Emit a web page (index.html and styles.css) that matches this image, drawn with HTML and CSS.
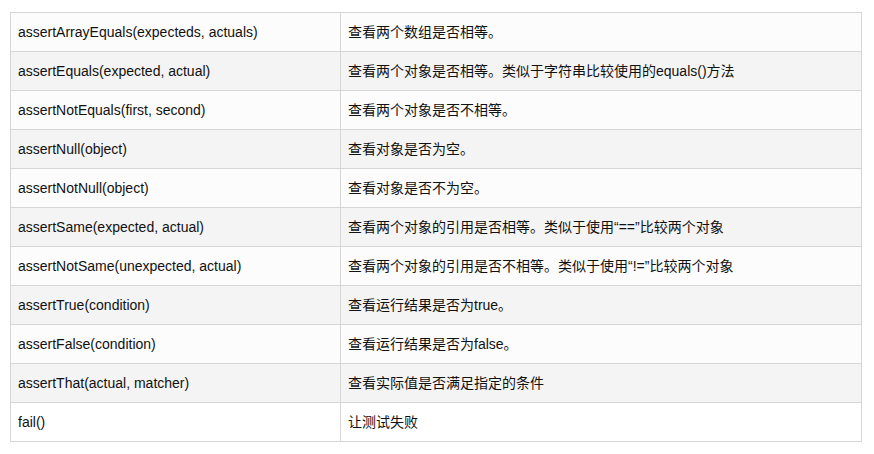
FILE: index.html
```html
<!DOCTYPE html>
<html lang="zh">
<head>
<meta charset="utf-8">
<link rel="stylesheet" href="styles.css">
</head>
<body>
<table class="api">
  <tr><td class="m">assertArrayEquals(expecteds, actuals)</td><td>查看两个数组是否相等。</td></tr>
  <tr><td class="m">assertEquals(expected, actual)</td><td>查看两个对象是否相等。类似于字符串比较使用的equals()方法</td></tr>
  <tr><td class="m">assertNotEquals(first, second)</td><td>查看两个对象是否不相等。</td></tr>
  <tr><td class="m">assertNull(object)</td><td>查看对象是否为空。</td></tr>
  <tr><td class="m">assertNotNull(object)</td><td>查看对象是否不为空。</td></tr>
  <tr><td class="m">assertSame(expected, actual)</td><td>查看两个对象的引用是否相等。类似于使用“==”比较两个对象</td></tr>
  <tr><td class="m">assertNotSame(unexpected, actual)</td><td>查看两个对象的引用是否不相等。类似于使用“!=”比较两个对象</td></tr>
  <tr><td class="m">assertTrue(condition)</td><td>查看运行结果是否为true。</td></tr>
  <tr><td class="m">assertFalse(condition)</td><td>查看运行结果是否为false。</td></tr>
  <tr><td class="m">assertThat(actual, matcher)</td><td>查看实际值是否满足指定的条件</td></tr>
  <tr><td class="m">fail()</td><td>让测试失败</td></tr>
</table>
</body>
</html>
```
FILE: styles.css
```css
html, body {
  margin: 0;
  padding: 0;
  background: #ffffff;
}
body {
  padding: 12px 12px 0 10px;
  font-family: "Liberation Sans", Arial, "Noto Sans CJK SC", sans-serif;
  font-size: 14px;
  color: #111;
}
.api {
  border-collapse: collapse;
  width: 852px;
  table-layout: fixed;
}
.api td {
  border: 1px solid #d6d6d6;
  height: 39px;
  padding: 0 7px;
  box-sizing: border-box;
  vertical-align: middle;
  line-height: 16px;
}
.api td.m {
  width: 330px;
}
.api tr:nth-child(odd) td {
  background: #fcfcfc;
}
.api tr:nth-child(even) td {
  background: #f4f4f4;
}
.api tr:last-child td {
  background: #ffffff;
}
```
